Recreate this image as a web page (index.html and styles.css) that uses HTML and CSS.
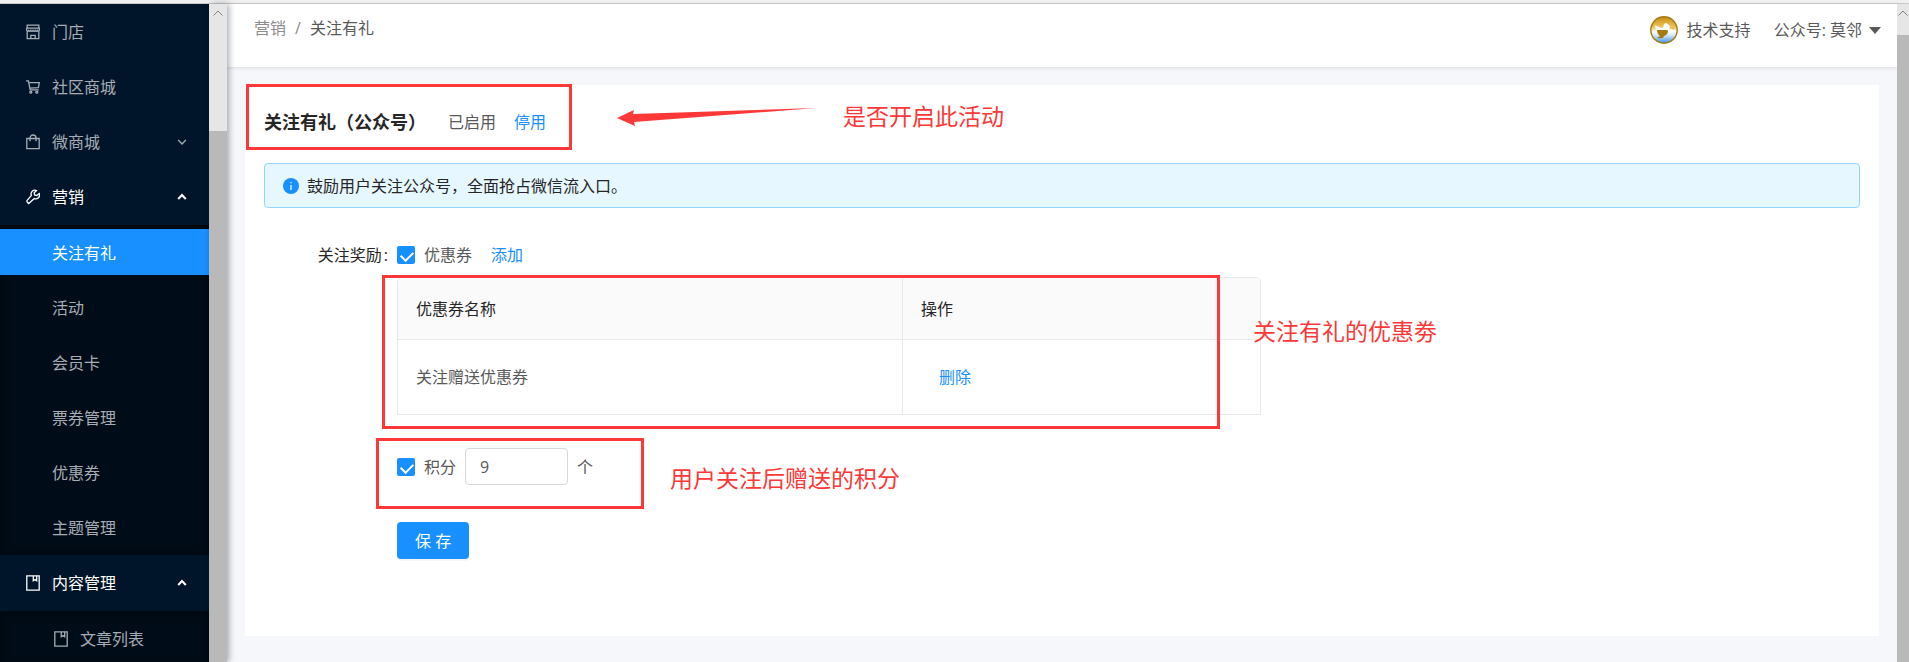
FILE: index.html
```html
<!DOCTYPE html>
<html lang="zh-CN">

<head>
  <meta charset="utf-8">
  <meta name="viewport" content="width=device-width">
  <title>关注有礼</title>
  <link rel="stylesheet" href="styles.css">
</head>

<body>
  <div class="window-edge"></div>
  <div class="app">
    <nav class="sidebar">
      <ul class="menu">
        <li><a class="item" href="#">
          <svg class="icon" viewBox="0 0 14 16"><path d="M1.2 1.2h11.6v3H1.2zM.7 4.2h12.6v2.2q-1 1.8-2.1 0-1 1.8-2.1 0-1 1.8-2.1 0-1 1.8-2.1 0-1 1.8-2.1 0-1.1 1.8-2.2 0zM1.2 7.8v6.9h11.6V7.8M4.8 14.7v-3.4h4.4v3.4"/></svg>
          门店</a></li>
        <li><a class="item" href="#">
          <svg class="icon" viewBox="0 0 14 16"><path d="M0 1.8h2.4l1.8 9h8.6M2.8 3.6h10.5l-.9 5-8.6.6"/><circle cx="4.8" cy="13.2" r="1"/><circle cx="10.8" cy="13.2" r="1"/></svg>
          社区商城</a></li>
        <li><a class="item" href="#">
          <svg class="icon" viewBox="0 0 14 16"><path d="M.8 4.5h12.4v10.2H.8zM4 7.3V4a3 3 0 0 1 6 0v3.3"/></svg>
          微商城
          <svg class="arrow" viewBox="0 0 10 10"><path d="M1.2 3l3.8 4 3.8-4"/></svg></a></li>
        <li>
          <a class="item open" href="#">
            <svg class="icon" viewBox="0 0 14 16"><path d="M10.4 1.6a3.7 3.7 0 0 0-5 4.8L.9 11.6l.3 1.6 1.5 1.4L8.3 9.6a3.8 3.8 0 0 0 4.9-5L10.8 6.6 8.6 6 8.2 3.8z"/></svg>
            营销
            <svg class="arrow" viewBox="0 0 10 10"><path d="M1.2 7l3.8-4 3.8 4"/></svg></a>
          <ul class="submenu">
            <li><a class="item selected" href="#">关注有礼</a></li>
            <li><a class="item" href="#">活动</a></li>
            <li><a class="item" href="#">会员卡</a></li>
            <li><a class="item" href="#">票券管理</a></li>
            <li><a class="item" href="#">优惠券</a></li>
            <li><a class="item" href="#">主题管理</a></li>
          </ul>
        </li>
        <li>
          <a class="item open" href="#">
            <svg class="icon" viewBox="0 0 14 16"><path d="M.8.8h12.4v14.4H.8zM7.3.8v5l1.7-1.3 1.7 1.3v-5"/></svg>
            内容管理
            <svg class="arrow" viewBox="0 0 10 10"><path d="M1.2 7l3.8-4 3.8 4"/></svg></a>
          <ul class="submenu">
            <li><a class="item with-icon" href="#">
              <svg class="icon" viewBox="0 0 14 16"><path d="M.8.8h12.4v14.4H.8zM7.3.8v5l1.7-1.3 1.7 1.3v-5"/></svg>
              文章列表</a></li>
          </ul>
        </li>
      </ul>
    </nav>
    <div class="scrollbar side-scroll">
      <svg viewBox="0 0 10 6"><path d="M.5 5.5L5 1l4.5 4.5"/></svg>
      <div class="thumb"></div>
    </div>

    <div class="page">
      <header class="header">
        <div class="breadcrumb">
          <a href="#">营销</a><span class="sep">/</span><span>关注有礼</span>
        </div>
        <div class="account">
          <a class="support" href="#">
            <svg class="avatar" viewBox="0 0 28 28">
              <defs>
                <linearGradient id="sky" x1="0" y1="0" x2="0" y2="1">
                  <stop offset="0" stop-color="#c58e14"/>
                  <stop offset=".38" stop-color="#eec25a"/>
                  <stop offset=".5" stop-color="#f8e3ae"/>
                  <stop offset=".54" stop-color="#fff"/>
                  <stop offset=".7" stop-color="#d3e9fa"/>
                  <stop offset="1" stop-color="#3b92dd"/>
                </linearGradient>
              </defs>
              <circle cx="14" cy="14" r="13.2" fill="url(#sky)" stroke="#a67a12" stroke-width="1.4"/>
              <path d="M5 9l5 2.5 3 .5 1-4 2-1 3 2 1 2-1 3 3-1 4 1-2 2h-5l-3 3H8l-2-3H3l3-1z" fill="#fff"/>
              <path d="M7 14h9q2 0 2 1 0 4-4 5l-1 2q-3 .5-6 0l3-2q-3-2-3-6z" fill="#a67a12"/>
              <path d="M20 11h4l1 2-3 .5z" fill="#e5bd61"/>
            </svg>
            技术支持</a>
          <button class="switcher" type="button">公众号: 莫邻<span class="caret"></span></button>
        </div>
      </header>

      <main class="card">
        <div class="title-row">
          <h1>关注有礼（公众号）</h1>
          <span>已启用</span>
          <a href="#">停用</a>
        </div>

        <div class="alert">
          <svg viewBox="0 0 16 16"><circle cx="8" cy="8" r="8" fill="#1890ff"/><path d="M8 7v5M8 4v1.3" stroke="#fff" stroke-width="1.2"/></svg>
          鼓励用户关注公众号，全面抢占微信流入口。
        </div>

        <form class="form">
          <div class="form-label">关注奖励<span class="colon">:</span></div>
          <div class="form-body">
            <div class="line">
              <input type="checkbox" id="coupon" checked>
              <label for="coupon">优惠券</label>
              <a href="#">添加</a>
            </div>
            <table>
              <thead>
                <tr><th class="name">优惠券名称</th><th>操作</th></tr>
              </thead>
              <tbody>
                <tr><td>关注赠送优惠券</td><td><a class="delete" href="#">删除</a></td></tr>
              </tbody>
            </table>
            <div class="line points">
              <input type="checkbox" id="points" checked>
              <label for="points">积分</label>
              <input type="text" class="num" value="9" aria-label="积分数量">
              <span>个</span>
            </div>
            <button class="save" type="button">保 存</button>
          </div>
        </form>

        <!-- notes drawn over the page -->
        <div class="mark mark-title"></div>
        <div class="mark mark-table"></div>
        <div class="mark mark-points"></div>
        <svg class="pointer" viewBox="0 0 200 20"><path d="M0 10L17 2l-1 4L199 0 17 14l1 4z"/></svg>
        <p class="note note-title">是否开启此活动</p>
        <p class="note note-table">关注有礼的优惠劵</p>
        <p class="note note-points">用户关注后赠送的积分</p>
      </main>
    </div>

    <div class="scrollbar page-scroll">
      <svg viewBox="0 0 10 6"><path d="M.5 5.5L5 1l4.5 4.5"/></svg>
      <div class="thumb"></div>
    </div>
  </div>
</body>

</html>
```

FILE: styles.css
```css
* {
  box-sizing: border-box;
}

body {
  margin: 0;
  height: 100vh;
  display: flex;
  flex-direction: column;
  overflow: hidden;
  background: #f6f7fa;
  color: #595959;
  font-family: "Open Sans", "Noto Sans CJK SC", sans-serif;
  font-size: 16px;
  line-height: 24px;
}

a {
  color: #1890ff;
  text-decoration: none;
}

ul {
  list-style: none;
  margin: 0;
  padding: 0;
}

.window-edge {
  flex: none;
  height: 4px;
  background: #f0f0f0;
  border-bottom: 1px solid #cacaca;
}

.app {
  flex: 1;
  min-height: 0;
  display: flex;
}

/* sidebar */
.sidebar {
  flex: none;
  width: 209px;
  overflow: hidden;
  background: #001529;
}

.menu {
  padding-top: 5px;
  display: flex;
  flex-direction: column;
  gap: 9px;
}

.item {
  display: flex;
  align-items: center;
  height: 46px;
  padding: 0 22px 0 26px;
  color: #a6adb4;
}

.icon {
  width: 14px;
  height: 16px;
  margin-right: 12px;
}

.icon path,
.icon circle,
.arrow path {
  fill: none;
  stroke: currentColor;
  stroke-width: 1.3;
}

.arrow {
  width: 10px;
  height: 10px;
  margin-left: auto;
}

.open {
  color: #fff;
}

.open .arrow path {
  stroke-width: 2;
}

.submenu {
  margin-top: 5px;
  padding: 4px 0 5px;
  margin-bottom: -4px;
  display: flex;
  flex-direction: column;
  gap: 9px;
  background: #000c17;
  box-shadow: inset 0 2px 8px rgba(0, 0, 0, 0.45);
}

.submenu .item {
  padding-top: 1px;
  padding-left: 52px;
}

.submenu .with-icon {
  padding-left: 54px;
}

.submenu .selected {
  background: #1890ff;
  color: #fff;
}

/* scrollbars */
.scrollbar {
  flex: none;
  display: flex;
  flex-direction: column;
  align-items: center;
  overflow: hidden;
  background: #e6e6e6;
}

.scrollbar svg {
  flex: none;
  width: 10px;
  height: 6px;
  margin-top: 6px;
}

.scrollbar path {
  fill: none;
  stroke: #858585;
}

.thumb {
  flex: 1;
  width: 100%;
  background: #b9b9b9;
}

.side-scroll {
  width: 18px;
  z-index: 1;
  box-shadow: 2px 0 6px rgba(0, 21, 41, 0.35);
}

.side-scroll .thumb {
  margin-top: 115px;
}

.page-scroll {
  width: 12px;
}

.page-scroll .thumb {
  margin-top: 19px;
}

/* header */
.page {
  flex: 1;
  min-width: 0;
}

.header {
  display: flex;
  justify-content: space-between;
  height: 63px;
  padding: 12px 16px 0 27px;
  background: #fff;
  box-shadow: 0 1px 4px rgba(0, 21, 41, 0.12);
}

.breadcrumb a {
  color: #8c8c8c;
}

.sep {
  margin: 0 9px;
  color: #8c8c8c;
}

.account,
.support {
  display: flex;
  align-items: center;
  height: 28px;
}

.account {
  gap: 23px;
}

.support {
  gap: 9px;
  color: #595959;
}

.avatar {
  width: 28px;
  height: 28px;
}

.switcher {
  display: flex;
  align-items: center;
  gap: 7px;
  padding: 0;
  border: 0;
  background: none;
  color: #595959;
  font: inherit;
}

.caret {
  border: 6px solid transparent;
  border-top: 7px solid #595959;
  border-bottom: 0;
}

/* content */
.card {
  position: relative;
  margin: 18px 18px 0;
  padding: 24px 19px 77px;
  background: #fff;
}

.title-row {
  display: flex;
  align-items: center;
  gap: 18px;
  height: 26px;
}

.title-row h1 {
  margin: 0 4px 0 0;
  color: #262626;
  font-size: 18px;
  font-weight: bold;
}

.alert {
  display: flex;
  align-items: center;
  gap: 8px;
  height: 45px;
  margin-top: 28px;
  padding: 0 18px;
  border: 1px solid #91d5ff;
  border-radius: 4px;
  background: #e6f7ff;
  color: #262626;
}

.alert svg {
  width: 16px;
  height: 16px;
}

.form {
  display: flex;
  margin-top: 35px;
}

.form-label {
  width: 133px;
  padding-right: 9px;
  color: #262626;
  text-align: right;
}

.colon {
  margin-left: 2px;
}

.form-body {
  flex: 1;
  max-width: 864px;
}

.line {
  display: flex;
  align-items: center;
  gap: 9px;
}

.line a {
  margin-left: 10px;
}

input[type="checkbox"] {
  appearance: none;
  position: relative;
  width: 18px;
  height: 18px;
  margin: 0;
  border-radius: 2px;
  background: #1890ff;
}

input[type="checkbox"]:checked::after {
  content: "";
  position: absolute;
  left: 6px;
  top: 3px;
  width: 6px;
  height: 10px;
  border: solid #fff;
  border-width: 0 2px 2px 0;
  transform: rotate(45deg);
}

table {
  width: 100%;
  margin-top: 10px;
  border: 1px solid #e8e8e8;
  border-radius: 5px 5px 0 0;
  border-spacing: 0;
  overflow: hidden;
}

th,
td {
  height: 74px;
  padding: 0 18px;
  text-align: left;
}

th {
  height: 62px;
  border-bottom: 1px solid #e8e8e8;
  background: #fafafa;
  color: #262626;
  font-weight: normal;
}

.name {
  width: 505px;
}

th:first-child,
td:first-child {
  border-right: 1px solid #e8e8e8;
}

.delete {
  margin-left: 18px;
}

.points {
  margin-top: 33px;
}

.num {
  width: 103px;
  height: 37px;
  padding: 0 14px;
  border: 1px solid #d9d9d9;
  border-radius: 4px;
  color: #595959;
  font: inherit;
}

.save {
  height: 37px;
  margin-top: 37px;
  padding: 0 18px;
  border: 0;
  border-radius: 4px;
  background: #1890ff;
  box-shadow: 0 2px 0 rgba(0, 0, 0, 0.04);
  color: #fff;
  font: inherit;
}

/* notes over the page */
.mark {
  position: absolute;
  border: 3px solid #fd3838;
}

.mark-title {
  left: 1px;
  top: -1px;
  width: 326px;
  height: 66px;
}

.mark-table {
  left: 137px;
  top: 190px;
  width: 838px;
  height: 154px;
}

.mark-points {
  left: 131px;
  top: 353px;
  width: 268px;
  height: 71px;
}

.pointer {
  position: absolute;
  left: 372px;
  top: 23px;
  width: 200px;
  height: 20px;
  fill: #fd3838;
}

.note {
  position: absolute;
  margin: 0;
  color: #fd3838;
  font-size: 23px;
  line-height: 32px;
  white-space: nowrap;
}

.note-title {
  left: 598px;
  top: 15px;
}

.note-table {
  left: 1008px;
  top: 230px;
}

.note-points {
  left: 425px;
  top: 377px;
}
```
